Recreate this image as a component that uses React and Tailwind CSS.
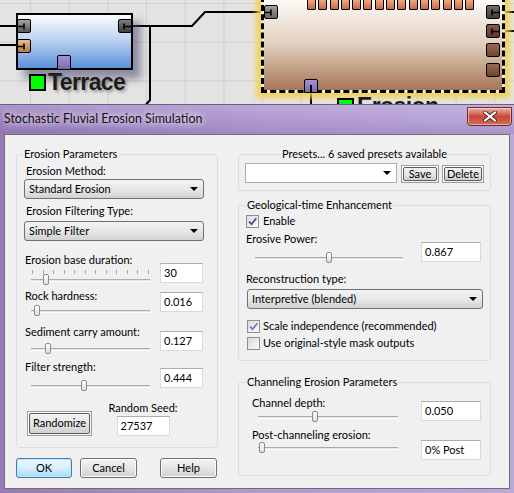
import React from 'react'

const UI = "font-['Lato','Noto_Sans',sans-serif]"

function Port({ className, mark }) {
  return (
    <div className={`absolute w-[14px] h-[14px] rounded-[2px] border border-black ${className}`}>
      {mark === 'in' && (
        <svg className="absolute left-0 top-0" width="12" height="12" viewBox="0 0 12 12">
          <path d="M0 6.5H6M6 3.5V9.5" stroke="#000" strokeWidth="1.6" fill="none" />
        </svg>
      )}
      {mark === 'out' && (
        <svg className="absolute left-0 top-0" width="12" height="12" viewBox="0 0 12 12">
          <path d="M12 6.5H5M5 3.5V9.5" stroke="#000" strokeWidth="1.6" fill="none" />
        </svg>
      )}
    </div>
  )
}

function NodeCanvas() {
  const topPorts = Array.from({ length: 15 })
  return (
    <>
      {/* connections */}
      <svg className="absolute left-0 top-0" width="514" height="110">
        <g stroke="#000" strokeWidth="2" fill="none">
          <path d="M0 26H18M0 45H18" />
          <path d="M131 26H192L205 12H265" />
          <path d="M150 26V100L143 108" />
          <path d="M311 92V108" />
          <path d="M500 12H514M500 31H514" />
        </g>
      </svg>

      {/* Terrace node */}
      <div className="absolute left-[16px] top-[13px] w-[117px] h-[57px] border-2 border-black bg-gradient-to-b from-[#fbfcff] via-[#b8d0f0] to-[#5b90d8] shadow-[8px_9px_8px_rgba(70,70,110,0.55)]" />
      <Port className="left-[17px] top-[19px] bg-gradient-to-b from-[#a6a6a6] to-[#585858]" mark="in" />
      <Port className="left-[17px] top-[39px] bg-gradient-to-b from-[#f0c08a] to-[#b27a44]" mark="in" />
      <Port className="left-[118px] top-[19px] bg-gradient-to-b from-[#7d7d7d] to-[#3f3f3f]" mark="out" />
      <div className="absolute left-[57px] top-[55px] w-[14px] h-[15px] rounded-t-[2px] border border-black bg-gradient-to-b from-[#a993d8] to-[#7c68ad]" />
      <div className="absolute left-[29px] top-[74px] w-[17px] h-[17px] border-2 border-black bg-[#00ff00]" />
      <div className="absolute left-[48px] top-[69px] font-['Liberation_Sans',Arial,sans-serif] font-bold text-[23px] tracking-[-0.6px] leading-[26px] text-[#1c1c1c] [text-shadow:2px_2px_3px_rgba(0,0,0,0.35)]">
        Terrace
      </div>

      {/* Erosion node (selected) */}
      <div className="absolute left-[261px] top-[-4px] w-[244px] h-[97px] border-[3px] border-dashed border-black bg-[#f1ecd8] shadow-[0_0_5px_5px_rgba(242,208,70,0.85)]">
        <div className="h-full bg-gradient-to-b from-[#fdfbf8] via-[#e2cfbf] to-[#a47756]" />
      </div>
      <div className="absolute left-[307px] top-[-1px] flex gap-[2.3px]">
        {topPorts.map((_, i) => (
          <div key={i} className="w-[9px] h-[11px] rounded-[1px] border border-black bg-gradient-to-b from-[#f2a783] to-[#c46a48]" />
        ))}
      </div>
      <Port className="left-[264px] top-[5px] bg-gradient-to-b from-[#a2a2a2] to-[#646464]" mark="in" />
      <Port className="left-[486px] top-[5px] bg-gradient-to-b from-[#6d6d6d] to-[#3e3e3e]" mark="out" />
      <Port className="left-[486px] top-[24px] bg-gradient-to-b from-[#8a5b45] to-[#5a3a2a]" mark="out" />
      <Port className="left-[486px] top-[43px] bg-gradient-to-b from-[#9a6a50] to-[#6d4532]" />
      <Port className="left-[486px] top-[63px] bg-gradient-to-b from-[#9a6a50] to-[#6d4532]" />
      <div className="absolute left-[304px] top-[79px] w-[14px] h-[14px] rounded-t-[2px] border border-black bg-gradient-to-b from-[#a993d8] to-[#7c68ad]">
        <div className="ml-[5px] mt-[5px] w-[2px] h-[8px] bg-black" />
      </div>
      <div className="absolute left-[337px] top-[98px] w-[17px] h-[17px] border-2 border-black bg-[#00ff00]" />
      <div className="absolute left-[357px] top-[93px] font-['Liberation_Sans',Arial,sans-serif] font-bold text-[23px] tracking-[-0.6px] leading-[26px] text-[#1c1c1c]">
        Erosion
      </div>
    </>
  )
}

function Label({ className = '', children }) {
  return <div className={`h-[16px] leading-[16px] whitespace-nowrap ${className}`}>{children}</div>
}

function Combo({ className = '', children, white }) {
  return (
    <div
      className={`flex items-center h-[20px] pl-[4px] pr-[5px] border ${
        white
          ? 'border-[#abadb3] bg-white'
          : 'rounded-[3px] border-[#707070] bg-gradient-to-b from-[#f3f3f3] via-[#e8e8e8] to-[#d2d2d2]'
      } ${className}`}
    >
      <span className="flex-1 truncate">{children}</span>
      <svg width="8" height="4" viewBox="0 0 8 4">
        <path d="M0 0H8L4 4Z" fill="#000" />
      </svg>
    </div>
  )
}

function Field({ className = '', children }) {
  return (
    <div className={`h-[20px] pl-[3px] leading-[18px] bg-white border border-[#d6d9e0] border-t-[#abadb3] ${className}`}>
      {children}
    </div>
  )
}

function Slider({ className = '', thumb, ticks }) {
  return (
    <div className={className}>
      {ticks && (
        <div className="mx-[1px] mt-[2px] h-[4px] flex justify-between">
          {Array.from({ length: 12 }).map((_, i) => (
            <div key={i} className="w-px h-full bg-[#a4a4a4]" />
          ))}
        </div>
      )}
      <div className="relative h-[12px]">
        <div className="absolute left-0 right-0 top-[5px] h-[3px] border-t border-[#a9a9a9] bg-[#e3e3e3] border-b border-b-white" />
        <div className={`absolute top-0 w-[6px] h-[11px] rounded-[2px] border border-[#8a8a8a] bg-gradient-to-b from-white to-[#dedede] ${thumb}`} />
      </div>
    </div>
  )
}

function Check({ checked, faint }) {
  return (
    <div className="relative w-[13px] h-[13px] border border-[#8e8f8f] bg-gradient-to-br from-[#dadada] to-[#fbfbfb]">
      {checked && (
        <svg className="absolute left-0 top-0" width="11" height="11" viewBox="0 0 11 11">
          <path d="M2 5.5L4.5 8.2L9.3 2.2" stroke={faint ? '#6a7cb4' : '#3d4f8f'} strokeWidth="1.8" fill="none" />
        </svg>
      )}
    </div>
  )
}

function Button({ className = '', children, primary }) {
  return (
    <div
      className={`h-[20px] flex items-center justify-center rounded-[3px] border ${
        primary
          ? 'border-[#3c7fb1] bg-gradient-to-b from-[#eaf6fd] via-[#d9f0fc] to-[#a7d9f5] shadow-[inset_0_0_0_1px_#bfe6fb]'
          : 'border-[#707070] bg-gradient-to-b from-[#f2f2f2] via-[#e6e6e6] to-[#cfcfcf] shadow-[inset_0_0_0_1px_#fbfbfb]'
      } ${className}`}
    >
      {children}
    </div>
  )
}

function FramedButton({ className = '', children }) {
  return (
    <div className={`p-[1px] border border-[#9e9e9e] shadow-[inset_1px_1px_0_#fff] ${className}`}>
      <div className="h-full flex items-center justify-center rounded-[2px] border border-[#5f5f5f] bg-gradient-to-b from-[#f2f2f2] via-[#e6e6e6] to-[#cfcfcf]">
        {children}
      </div>
    </div>
  )
}

function Group({ title, className = '', legendCls = 'ml-[6px]', children }) {
  return (
    <fieldset className={`rounded-[3px] border border-[#d5dfe5] ${className}`}>
      <legend className={`px-[1px] leading-[16px] ${legendCls}`}>{title}</legend>
      {children}
    </fieldset>
  )
}

function SliderRow({ label, value, rowCls, boxCls, sliderCls, thumb, ticks }) {
  return (
    <div className={`flex ${rowCls}`}>
      <div className="w-[143px]">
        <Label className="ml-[8px]">{label}</Label>
        <Slider className={`ml-[14px] w-[119px] ${sliderCls}`} thumb={thumb} ticks={ticks} />
      </div>
      <Field className={`w-[43px] ${boxCls}`}>{value}</Field>
    </div>
  )
}

function Dialog() {
  return (
    <div className={`absolute left-0 top-[104px] w-[514px] h-[389px] flex flex-col border-t border-[#6f5a8c] bg-gradient-to-r from-[#977bb8] via-[#b09ad0] to-[#bba8d8] text-[11px] text-black ${UI}`}>
      {/* title bar */}
      <div className="h-[29px] flex items-start justify-between bg-gradient-to-b from-[#cdbfe2]/40 via-transparent to-[#8a6cad]/35">
        <span className="ml-[4px] mt-[6px] text-[12.4px] leading-[16px] text-[#111] [text-shadow:0_0_6px_#f1ebf9,0_0_10px_#f1ebf9]">
          Stochastic Fluvial Erosion Simulation
        </span>
        <div className="mt-[2px] mr-[2px] w-[45px] h-[19px] flex items-center justify-center rounded-b-[4px] border border-[#6a2a2a] bg-gradient-to-b from-[#ecb1a6] via-[#c8473a] to-[#d66a5c] shadow-[inset_0_0_0_1px_rgba(255,255,255,0.45)]">
          <svg width="14" height="11" viewBox="0 0 14 11">
            <path d="M2 1.5L12 9.5M12 1.5L2 9.5" stroke="#4b2b2b" strokeWidth="4" strokeLinecap="round" />
            <path d="M2 1.5L12 9.5M12 1.5L2 9.5" stroke="#fff" strokeWidth="2.2" strokeLinecap="round" />
          </svg>
        </div>
      </div>

      {/* client area */}
      <div className="flex-1 mx-[4px] mb-[4px] border border-[#6f6f6f] bg-[#f0f0f0] flex gap-[20px] pl-[11px] pt-[11px]">
        {/* left column */}
        <div className="w-[202px]">
          <Group title="Erosion Parameters" className="h-[302px]">
            <Label className="ml-[9px] mt-[1px]">Erosion Method:</Label>
            <Combo className="ml-[7px] w-[180px]">Standard Erosion</Combo>
            <Label className="ml-[9px] mt-[4px]">Erosion Filtering Type:</Label>
            <Combo className="ml-[7px] mt-[2px] w-[180px]">Simple Filter</Combo>

            <SliderRow
              label="Erosion base duration:"
              value="30"
              rowCls="mt-[11px] h-[36px]"
              boxCls="mt-[11px]"
              sliderCls="mt-0"
              thumb="left-[12px]"
              ticks
            />
            <SliderRow
              label="Rock hardness:"
              value="0.016"
              rowCls="h-[36px]"
              boxCls="mt-[4px]"
              sliderCls="mt-[1px]"
              thumb="left-[3px]"
            />
            <SliderRow
              label="Sediment carry amount:"
              value="0.127"
              rowCls="h-[35px]"
              boxCls="mt-[7px]"
              sliderCls="mt-[3px]"
              thumb="left-[14px]"
            />
            <SliderRow
              label="Filter strength:"
              value="0.444"
              rowCls="h-[41px]"
              boxCls="mt-[9px]"
              sliderCls="mt-[5px]"
              thumb="left-[50px]"
            />

            <div className="flex items-start">
              <FramedButton className="ml-[10px] mt-[11px] w-[65px] h-[25px]">Randomize</FramedButton>
              <div className="ml-[8px] w-[86px] flex flex-col items-center">
                <Label>Random Seed:</Label>
                <Field className="w-[53px]">27537</Field>
              </div>
            </div>
          </Group>

          <div className="mt-[10px] flex">
            <Button primary className="w-[56px]">OK</Button>
            <Button className="ml-[8px] w-[57px]">Cancel</Button>
            <Button className="ml-[23px] w-[57px]">Help</Button>
          </div>
        </div>

        {/* right column */}
        <div className="w-[253px]">
          <Group title="Presets... 6 saved presets available" className="h-[45px]" legendCls="mx-auto">
            <div className="flex items-start">
              <Combo white className="ml-[6px] mt-[1px] w-[152px]" />
              <FramedButton className="ml-[4px] mt-[3px] w-[38px] h-[18px]">Save</FramedButton>
              <FramedButton className="ml-[3px] mt-[3px] w-[42px] h-[18px]">Delete</FramedButton>
            </div>
          </Group>

          <Group title="Geological-time Enhancement" className="mt-[6px] h-[164px]" legendCls="ml-[7px]">
            <div className="h-[16px] flex items-center ml-[7px]">
              <Check checked />
              <span className="ml-[4px]">Enable</span>
            </div>
            <div className="mt-[2px] flex h-[40px]">
              <div className="w-[182px]">
                <Label className="ml-[7px]">Erosive Power:</Label>
                <Slider className="ml-[16px] mt-[5px] w-[148px]" thumb="left-[71px]" />
              </div>
              <Field className="mt-[11px] w-[60px]">0.867</Field>
            </div>
            <Label className="ml-[7px]">Reconstruction type:</Label>
            <Combo className="ml-[8px] mt-[2px] w-[236px]">Interpretive (blended)</Combo>
            <div className="mt-[9px] h-[16px] flex items-center ml-[8px]">
              <Check checked faint />
              <span className="ml-[3px]">Scale independence (recommended)</span>
            </div>
            <div className="mt-[1px] h-[16px] flex items-center ml-[8px]">
              <Check />
              <span className="ml-[3px]">Use original-style mask outputs</span>
            </div>
          </Group>

          <Group title="Channeling Erosion Parameters" className="mt-[13px] h-[102px]" legendCls="ml-[7px]">
            <div className="mt-[5px] flex h-[32px]">
              <div className="w-[182px]">
                <Label className="ml-[13px]">Channel depth:</Label>
                <Slider className="ml-[19px] w-[140px]" thumb="left-[54px]" />
              </div>
              <Field className="mt-[6px] w-[60px]">0.050</Field>
            </div>
            <div className="flex h-[34px]">
              <div className="w-[182px]">
                <Label className="ml-[13px]">Post-channeling erosion:</Label>
                <Slider className="ml-[19px] mt-[-1px] w-[140px]" thumb="left-[1px]" />
              </div>
              <Field className="mt-[13px] w-[60px]">0% Post</Field>
            </div>
          </Group>
        </div>
      </div>
    </div>
  )
}

export default function App() {
  return (
    <div className="relative w-[514px] h-[493px] overflow-hidden bg-[#e3e3e3] bg-[linear-gradient(to_right,#d0d0d0_1px,transparent_1px),linear-gradient(to_bottom,#d0d0d0_1px,transparent_1px)] bg-size-[38.7px_38.7px] bg-position-[30px_3px]">
      <NodeCanvas />
      <Dialog />
    </div>
  )
}
